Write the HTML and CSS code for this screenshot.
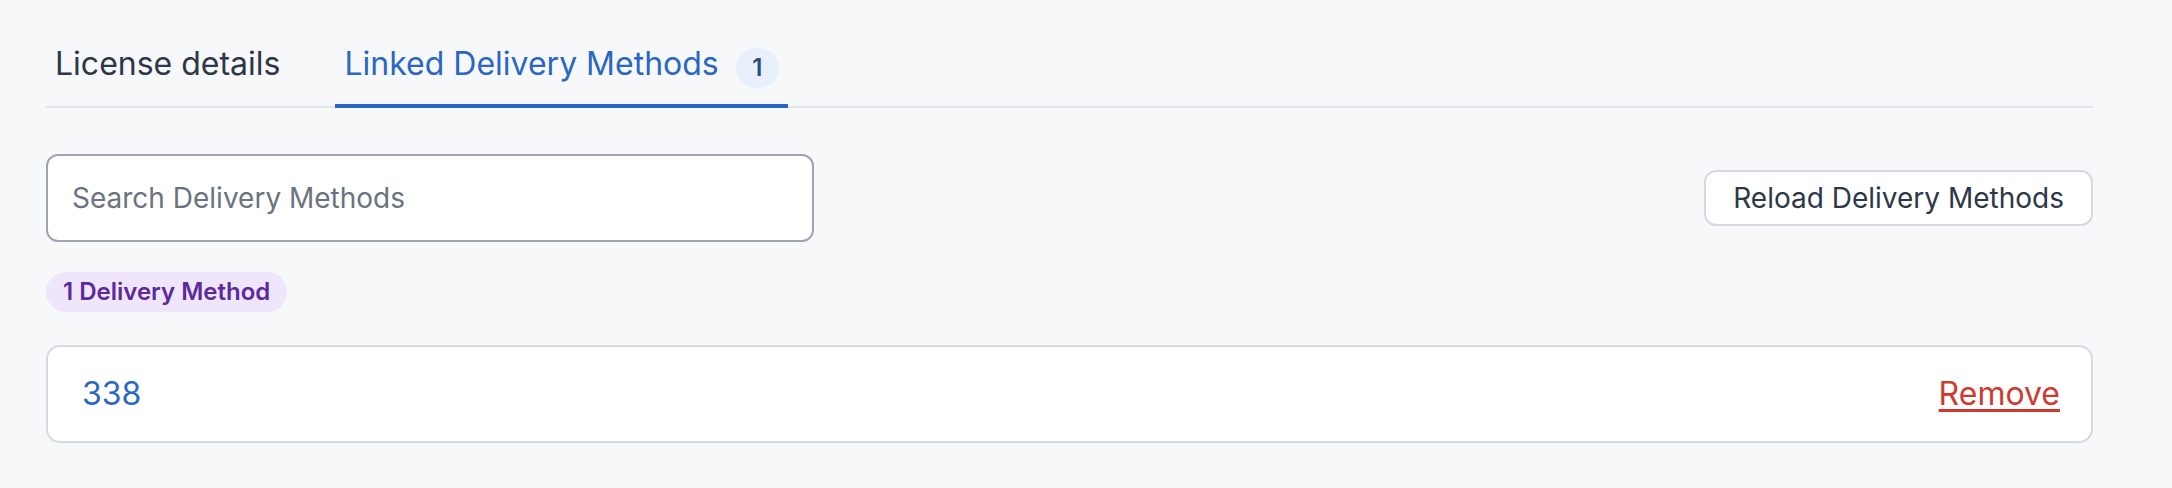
FILE: index.html
```html
<!DOCTYPE html>
<html lang="en">
<head>
    <meta charset="UTF-8">
    <title>License - Linked Delivery Methods</title>
    <link rel="stylesheet" href="styles.css">
</head>
<body>
    <div class="license-page">
        <div class="tabs">
            <div class="tab">License details</div>
            <div class="tab active">Linked Delivery Methods <span class="tab-count">1</span></div>
        </div>

        <div class="toolbar">
            <input class="search" type="text" placeholder="Search Delivery Methods">
            <button class="reload">Reload Delivery Methods</button>
        </div>

        <span class="count-badge">1 Delivery Method</span>

        <div class="method-list">
            <div class="method">
                <a class="method-id" href="#">338</a>
                <a class="remove" href="#">Remove</a>
            </div>
        </div>
    </div>
</body>
</html>
```

FILE: styles.css
```css
body {
    margin: 0;
    font-family: Inter, "Noto Sans", sans-serif;
    background-color: #f7f8fa;
    color: #2d3748;
}
.license-page {
    padding: 40px 79px 0 46px;
}
.tabs {
    display: flex;
    border-bottom: 2px solid #e2e5ea;
}
.tab {
    display: flex;
    align-items: center;
    padding: 0 9px 16px;
    margin-right: 46px;
    margin-bottom: -2px;
    font-size: 32px;
    line-height: 48px;
    color: #2d3748;
    border-bottom: 4px solid transparent;
}
.tab.active {
    color: #2a67c4;
    border-bottom-color: #2a67c4;
}
.tab-count {
    display: inline-block;
    min-width: 43px;
    height: 40px;
    margin-left: 17px;
    margin-top: 8px;
    border-radius: 20px;
    background-color: #e8f0fb;
    color: #2a4d7e;
    font-size: 24px;
    font-weight: 600;
    line-height: 40px;
    text-align: center;
}
.toolbar {
    display: flex;
    align-items: center;
    justify-content: space-between;
    margin-top: 46px;
}
.search {
    box-sizing: border-box;
    width: 768px;
    height: 88px;
    padding: 0 24px;
    border: 2px solid #9ea4b0;
    border-radius: 12px;
    background: white;
    font-family: inherit;
    font-size: 28px;
    color: #2d3748;
}
.search::placeholder {
    color: #6b7280;
}
.reload {
    box-sizing: border-box;
    height: 56px;
    padding: 0 27px;
    border: 2px solid #d5d9e0;
    border-radius: 12px;
    background: white;
    font-family: inherit;
    font-size: 28px;
    color: #2d3748;
    cursor: pointer;
}
.count-badge {
    display: inline-block;
    margin-top: 30px;
    padding: 0 17px;
    height: 40px;
    border-radius: 20px;
    background-color: #f0e6fc;
    color: #5b2a9e;
    font-size: 24px;
    font-weight: 600;
    line-height: 40px;
}
.method-list {
    margin-top: 33px;
}
.method {
    display: flex;
    justify-content: space-between;
    align-items: center;
    padding: 23px 31px 23px 34px;
    border: 2px solid #d5d9e0;
    border-radius: 14px;
    background: white;
    font-size: 32px;
    line-height: 48px;
}
.method-id {
    color: #2a67c4;
    text-decoration: none;
}
.remove {
    color: #cf3a30;
    text-decoration: underline;
    text-underline-offset: 4px;
    text-decoration-thickness: 3px;
}
```
